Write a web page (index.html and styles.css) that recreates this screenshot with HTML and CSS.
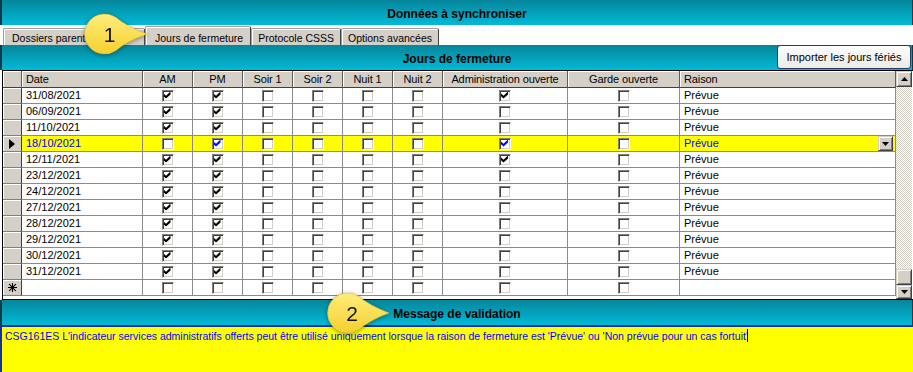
FILE: index.html
```html
<!DOCTYPE html>
<html lang="fr">
<head>
  <meta charset="UTF-8">
  <title>Données à synchroniser</title>
  <link rel="stylesheet" href="styles.css">
</head>
<body>
  <div class="window">
    <div class="bar">Données à synchroniser</div>

    <div class="tabs">
      <div class="tab first">Dossiers parents</div>
      <div class="tab active">Jours de fermeture</div>
      <div class="tab">Protocole CSSS</div>
      <div class="tab">Options avancées</div>
    </div>

    <div class="bar section">
      <span></span>
      <span>Jours de fermeture</span>
      <div class="import"><button>Importer les jours fériés</button></div>
    </div>

    <div class="grid-wrap">
      <div class="grid">
        <div class="row head">
          <div class="sel"></div>
          <div class="left">Date</div>
          <div>AM</div><div>PM</div><div>Soir 1</div><div>Soir 2</div>
          <div>Nuit 1</div><div>Nuit 2</div>
          <div>Administration ouverte</div><div>Garde ouverte</div>
          <div class="left">Raison</div>
        </div>

        <div class="row">
          <div class="sel"></div><div class="txt">31/08/2021</div>
          <div class="c"><i class="cb on"></i></div><div class="c"><i class="cb on"></i></div>
          <div class="c"><i class="cb"></i></div><div class="c"><i class="cb"></i></div>
          <div class="c"><i class="cb"></i></div><div class="c"><i class="cb"></i></div>
          <div class="c"><i class="cb on"></i></div><div class="c"><i class="cb"></i></div>
          <div class="txt">Prévue</div>
        </div>
        <div class="row">
          <div class="sel"></div><div class="txt">06/09/2021</div>
          <div class="c"><i class="cb on"></i></div><div class="c"><i class="cb on"></i></div>
          <div class="c"><i class="cb"></i></div><div class="c"><i class="cb"></i></div>
          <div class="c"><i class="cb"></i></div><div class="c"><i class="cb"></i></div>
          <div class="c"><i class="cb"></i></div><div class="c"><i class="cb"></i></div>
          <div class="txt">Prévue</div>
        </div>
        <div class="row">
          <div class="sel"></div><div class="txt">11/10/2021</div>
          <div class="c"><i class="cb on"></i></div><div class="c"><i class="cb on"></i></div>
          <div class="c"><i class="cb"></i></div><div class="c"><i class="cb"></i></div>
          <div class="c"><i class="cb"></i></div><div class="c"><i class="cb"></i></div>
          <div class="c"><i class="cb"></i></div><div class="c"><i class="cb"></i></div>
          <div class="txt">Prévue</div>
        </div>
        <div class="row current">
          <div class="sel"><svg width="7" height="10" viewBox="0 0 7 10"><path d="M0 0v10l6-5z"/></svg></div>
          <div class="txt">18/10/2021</div>
          <div class="c"><i class="cb"></i></div><div class="c"><i class="cb on"></i></div>
          <div class="c"><i class="cb"></i></div><div class="c"><i class="cb"></i></div>
          <div class="c"><i class="cb"></i></div><div class="c"><i class="cb"></i></div>
          <div class="c"><i class="cb on"></i></div><div class="c"><i class="cb"></i></div>
          <div class="txt combo">Prévue
            <span class="drop"><svg width="7" height="4" viewBox="0 0 7 4"><path d="M0 0h7L3.5 4z"/></svg></span>
          </div>
        </div>
        <div class="row">
          <div class="sel"></div><div class="txt">12/11/2021</div>
          <div class="c"><i class="cb on"></i></div><div class="c"><i class="cb on"></i></div>
          <div class="c"><i class="cb"></i></div><div class="c"><i class="cb"></i></div>
          <div class="c"><i class="cb"></i></div><div class="c"><i class="cb"></i></div>
          <div class="c"><i class="cb on"></i></div><div class="c"><i class="cb"></i></div>
          <div class="txt">Prévue</div>
        </div>
        <div class="row">
          <div class="sel"></div><div class="txt">23/12/2021</div>
          <div class="c"><i class="cb on"></i></div><div class="c"><i class="cb on"></i></div>
          <div class="c"><i class="cb"></i></div><div class="c"><i class="cb"></i></div>
          <div class="c"><i class="cb"></i></div><div class="c"><i class="cb"></i></div>
          <div class="c"><i class="cb"></i></div><div class="c"><i class="cb"></i></div>
          <div class="txt">Prévue</div>
        </div>
        <div class="row">
          <div class="sel"></div><div class="txt">24/12/2021</div>
          <div class="c"><i class="cb on"></i></div><div class="c"><i class="cb on"></i></div>
          <div class="c"><i class="cb"></i></div><div class="c"><i class="cb"></i></div>
          <div class="c"><i class="cb"></i></div><div class="c"><i class="cb"></i></div>
          <div class="c"><i class="cb"></i></div><div class="c"><i class="cb"></i></div>
          <div class="txt">Prévue</div>
        </div>
        <div class="row">
          <div class="sel"></div><div class="txt">27/12/2021</div>
          <div class="c"><i class="cb on"></i></div><div class="c"><i class="cb on"></i></div>
          <div class="c"><i class="cb"></i></div><div class="c"><i class="cb"></i></div>
          <div class="c"><i class="cb"></i></div><div class="c"><i class="cb"></i></div>
          <div class="c"><i class="cb"></i></div><div class="c"><i class="cb"></i></div>
          <div class="txt">Prévue</div>
        </div>
        <div class="row">
          <div class="sel"></div><div class="txt">28/12/2021</div>
          <div class="c"><i class="cb on"></i></div><div class="c"><i class="cb on"></i></div>
          <div class="c"><i class="cb"></i></div><div class="c"><i class="cb"></i></div>
          <div class="c"><i class="cb"></i></div><div class="c"><i class="cb"></i></div>
          <div class="c"><i class="cb"></i></div><div class="c"><i class="cb"></i></div>
          <div class="txt">Prévue</div>
        </div>
        <div class="row">
          <div class="sel"></div><div class="txt">29/12/2021</div>
          <div class="c"><i class="cb on"></i></div><div class="c"><i class="cb on"></i></div>
          <div class="c"><i class="cb"></i></div><div class="c"><i class="cb"></i></div>
          <div class="c"><i class="cb"></i></div><div class="c"><i class="cb"></i></div>
          <div class="c"><i class="cb"></i></div><div class="c"><i class="cb"></i></div>
          <div class="txt">Prévue</div>
        </div>
        <div class="row">
          <div class="sel"></div><div class="txt">30/12/2021</div>
          <div class="c"><i class="cb on"></i></div><div class="c"><i class="cb on"></i></div>
          <div class="c"><i class="cb"></i></div><div class="c"><i class="cb"></i></div>
          <div class="c"><i class="cb"></i></div><div class="c"><i class="cb"></i></div>
          <div class="c"><i class="cb"></i></div><div class="c"><i class="cb"></i></div>
          <div class="txt">Prévue</div>
        </div>
        <div class="row">
          <div class="sel"></div><div class="txt">31/12/2021</div>
          <div class="c"><i class="cb on"></i></div><div class="c"><i class="cb on"></i></div>
          <div class="c"><i class="cb"></i></div><div class="c"><i class="cb"></i></div>
          <div class="c"><i class="cb"></i></div><div class="c"><i class="cb"></i></div>
          <div class="c"><i class="cb"></i></div><div class="c"><i class="cb"></i></div>
          <div class="txt">Prévue</div>
        </div>
        <div class="row">
          <div class="sel"><svg width="9" height="9" viewBox="0 0 9 9"><path d="M4.5 0v9M0 4.5h9M1.2 1.2l6.6 6.6M7.8 1.2l-6.6 6.6" stroke="#000" stroke-width="1.1"/></svg></div>
          <div class="txt"></div>
          <div class="c"><i class="cb"></i></div><div class="c"><i class="cb"></i></div>
          <div class="c"><i class="cb"></i></div><div class="c"><i class="cb"></i></div>
          <div class="c"><i class="cb"></i></div><div class="c"><i class="cb"></i></div>
          <div class="c"><i class="cb"></i></div><div class="c"><i class="cb"></i></div>
          <div class="txt"></div>
        </div>
      </div>

      <div class="scroll">
        <div class="sbtn"><svg width="7" height="4" viewBox="0 0 7 4"><path d="M0 4h7L3.5 0z"/></svg></div>
        <div class="track"></div>
        <div class="sbtn"></div>
        <div class="sbtn"><svg width="7" height="4" viewBox="0 0 7 4"><path d="M0 0h7L3.5 4z"/></svg></div>
      </div>
    </div>

    <div class="bar">Message de validation</div>
    <div class="msg">CSG161ES L'indicateur services administratifs offerts peut être utilisé uniquement lorsque la raison de fermeture est 'Prévue' ou 'Non prévue pour un cas fortuit'<span class="caret"></span></div>

    <!-- callouts -->
    <svg class="callout c1" width="72" height="52" viewBox="0 0 72 52">
      <defs>
        <linearGradient id="y1" x1="0" y1="0" x2="0" y2="1">
          <stop offset="0" stop-color="#ffec7c"/>
          <stop offset="1" stop-color="#f6d02e"/>
        </linearGradient>
      </defs>
      <path d="M67 26Q47 19 36 9.6A20 20 0 1 0 36 42.4Q47 33 67 26z" fill="url(#y1)" stroke="#e2bd2a" stroke-width=".6"/>
      <text x="29.5" y="34" text-anchor="middle">1</text>
    </svg>
    <svg class="callout c2" width="72" height="52" viewBox="0 0 72 52">
      <defs>
        <linearGradient id="y2" x1="0" y1="0" x2="0" y2="1">
          <stop offset="0" stop-color="#ffec7c"/>
          <stop offset="1" stop-color="#f6d02e"/>
        </linearGradient>
      </defs>
      <path d="M66 26Q47 19 36 9.6A20 20 0 1 0 36 42.4Q47 33 66 26z" fill="url(#y2)" stroke="#e2bd2a" stroke-width=".6"/>
      <text x="29" y="34" text-anchor="middle">2</text>
    </svg>
  </div>
</body>
</html>
```

FILE: styles.css
```css
body {
  margin: 0;
  background: #fff;
  font-family: "Liberation Sans", Arial, sans-serif;
  font-size: 11px;
  color: #000;
}
.window {
  position: relative;
  width: 913px;
  height: 372px;
  overflow: hidden;
}
.bar {
  box-sizing: border-box;
  height: 25px;
  padding-top: 2px;
  background: linear-gradient(#05869b, #02bad6);
  border-left: 2px solid #0d3b45;
  border-right: 1px solid #0d3b45;
  font-weight: bold;
  font-size: 12px;
  display: flex;
  align-items: center;
  justify-content: center;
}
.bar.section {
  display: grid;
  grid-template-columns: 1fr auto 1fr;
  align-items: center;
  padding-top: 0;
}
.bar.section > span:nth-child(2) {
  padding-top: 2px;
}
.import {
  display: flex;
  justify-content: flex-end;
  align-self: start;
}
.import button {
  width: 134px;
  height: 24px;
  margin-right: 1px;
  border: 1px solid #1e3e6c;
  border-radius: 3px;
  background: linear-gradient(#fdfdfd, #eceae3);
  font-family: "Liberation Sans", Arial, sans-serif;
  font-size: 11px;
  padding: 0;
  color: #000;
}

/* tabs */
.tabs {
  height: 20px;
  display: flex;
  align-items: flex-end;
  padding-left: 3px;
  background: #fff;
  font-size: 10.5px;
}
.tab {
  box-sizing: border-box;
  height: 17px;
  padding: 1px 6px 0;
  background: #d4d0c8;
  border-top: 1px solid #a0a0a0;
  border-left: 1px solid #a0a0a0;
  border-right: 1px solid #404040;
  border-radius: 2px 2px 0 0;
  box-shadow: inset 1px 1px #fff;
  display: flex;
  align-items: center;
  white-space: nowrap;
}
.tab.first {
  width: 142px;
  padding-left: 8px;
}
.tab.active {
  height: 19px;
  padding: 3px 7px 0 9px;
  position: relative;
}

/* grid */
.grid-wrap {
  display: flex;
  height: 230px;
  box-sizing: border-box;
  margin-left: 2px;
  border-top: 1px solid #000;
  border-left: 1px solid #000;
  border-bottom: 1px solid #000;
}
.grid {
  width: 893px;
  background: #fff;
}
.row {
  display: grid;
  grid-template-columns: 19px 121px repeat(6, 50px) 125px 112px 216px;
  height: 16px;
}
.row > div {
  box-sizing: border-box;
  border-right: 1px solid #8a8a8a;
  border-bottom: 1px solid #8a8a8a;
  white-space: nowrap;
  overflow: hidden;
}
.row.head {
  height: 17px;
}
.row.head > div {
  background: #d4d0c8;
  border-right-color: #5c5c5c;
  border-bottom-color: #404040;
  box-shadow: inset 1px 1px #fff;
  text-align: center;
  line-height: 16px;
  letter-spacing: -0.1px;
}
.row.head > .left {
  text-align: left;
  padding-left: 4px;
}
.row > .sel {
  background: #d4d0c8;
  border-right-color: #404040;
  border-bottom-color: #808080;
  box-shadow: inset 1px 1px #fff;
  display: flex;
  align-items: center;
  justify-content: center;
}
.txt {
  padding-left: 4px;
  line-height: 15px;
}
.c {
  display: flex;
  align-items: center;
  justify-content: center;
}
.cb {
  display: block;
  position: relative;
  width: 12px;
  height: 12px;
  box-sizing: border-box;
  background: #fff;
  border: 1px solid;
  border-color: #808080 #fff #fff #808080;
  box-shadow: inset 1px 1px #404040, inset -1px -1px #d4d0c8;
}
.cb.on::after {
  content: "";
  position: absolute;
  left: 1px;
  top: 1px;
  width: 7px;
  height: 7px;
  background: #000;
  clip-path: polygon(0 30%, 36% 62%, 100% 0, 100% 42%, 36% 100%, 0 68%);
}
.row.current > div:not(.sel) {
  background: #ffff00;
  color: #0000ff;
}
.row.current .cb.on::after {
  background: #0000ff;
}
.combo {
  display: flex;
  align-items: center;
  justify-content: space-between;
  padding-right: 2px;
}
.drop {
  box-sizing: border-box;
  width: 15px;
  height: 15px;
  background: #d4d0c8;
  border: 1px solid;
  border-color: #d4d0c8 #404040 #404040 #d4d0c8;
  box-shadow: inset 1px 1px #fff, inset -1px -1px #808080;
  display: flex;
  align-items: center;
  justify-content: center;
}

/* scrollbar */
.scroll {
  width: 16px;
  display: flex;
  flex-direction: column;
  background: repeating-conic-gradient(#d4d0c8 0 25%, #fff 0 50%) 0 0 / 2px 2px;
}
.track {
  flex: 1;
}
.sbtn {
  box-sizing: border-box;
  height: 16px;
  background: #d4d0c8;
  border: 1px solid;
  border-color: #d4d0c8 #404040 #404040 #d4d0c8;
  box-shadow: inset 1px 1px #fff, inset -1px -1px #808080;
  display: flex;
  align-items: center;
  justify-content: center;
}
.sbtn:last-child {
  height: 14px;
}

/* message */
.msg {
  height: 47px;
  box-sizing: border-box;
  background: #ffff00;
  border-top: 2px solid #12339a;
  border-left: 2px solid #12339a;
  padding: 2px 3px;
  color: #0000ff;
  font-size: 10.5px;
  white-space: nowrap;
}
.caret {
  display: inline-block;
  width: 0;
  height: 13px;
  margin-left: -1px;
  border-left: 1px solid #000;
  vertical-align: -2px;
}

/* callouts */
.callout {
  position: absolute;
  filter: drop-shadow(0 1px 2px rgba(0,0,0,0.4));
}
.callout text {
  font-family: "Liberation Sans", Arial, sans-serif;
  font-size: 21px;
  fill: #111;
}
.c1 {
  left: 80px;
  top: 8px;
}
.c2 {
  left: 323px;
  top: 287px;
}
```
